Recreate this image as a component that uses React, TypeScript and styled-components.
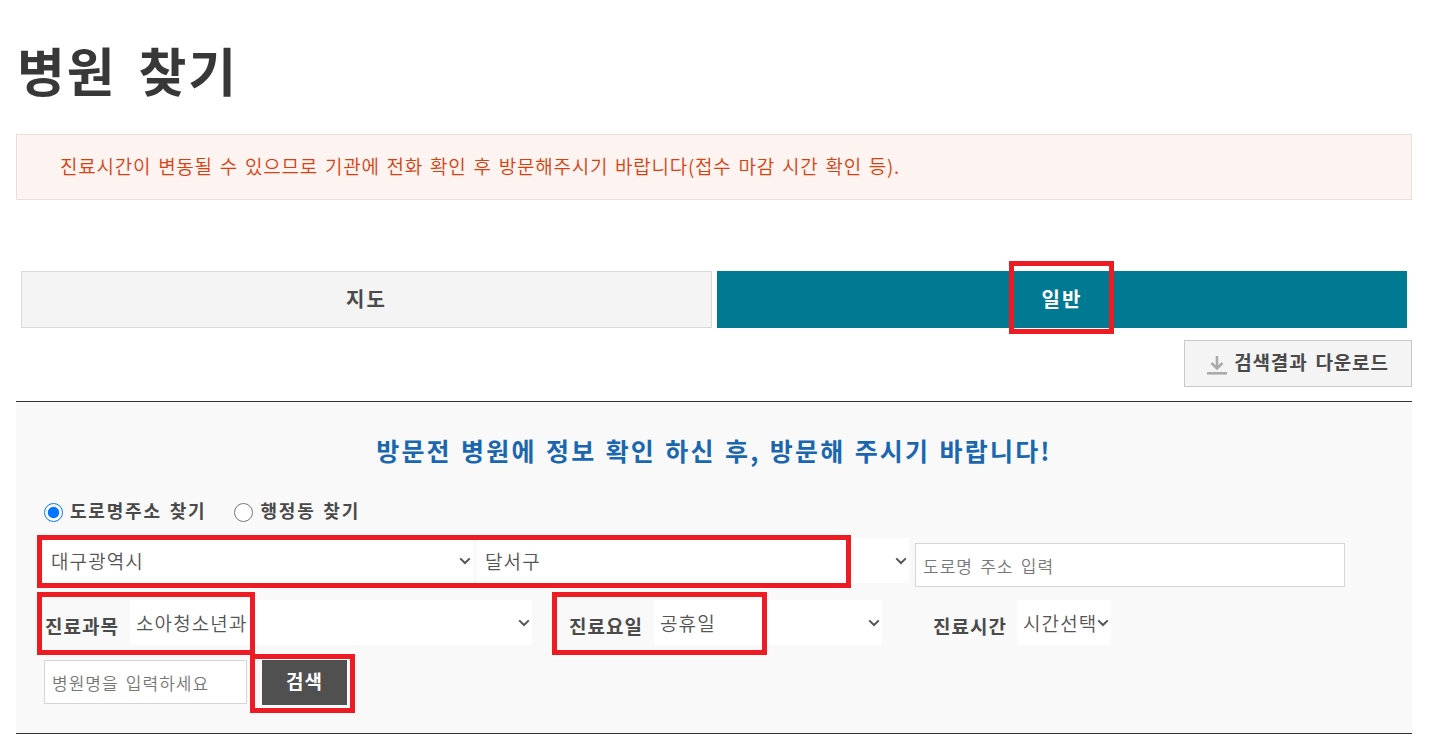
import React from "react";
import styled, { createGlobalStyle } from "styled-components";

const Global = createGlobalStyle`
  html, body { margin: 0; padding: 0; background: #fff; }
  body { font-family: "Noto Sans CJK KR", "Liberation Sans", sans-serif; color: #444; overflow: hidden; }
  * { box-sizing: border-box; }
`;

const chevron =
  "data:image/svg+xml,%3Csvg xmlns='http://www.w3.org/2000/svg' width='12' height='8' viewBox='0 0 12 8'%3E%3Cpath d='M1.2 1.4 6 6l4.8-4.6' fill='none' stroke='%23555' stroke-width='2'/%3E%3C/svg%3E";

const Page = styled.div`
  position: relative;
  width: 1438px;
  height: 751px;
  padding: 0 26px 0 16px;
  overflow: hidden;
`;
const Title = styled.h1`
  margin: 0;
  padding: 32px 0 0 1px;
  height: 134px;
  font-size: 52px;
  line-height: 76px;
  font-weight: 700;
  color: #383838;
  letter-spacing: 2px;
  word-spacing: 8px;
`;
const Alert = styled.div`
  height: 66px;
  padding: 0 43px 3px;
  display: flex;
  align-items: center;
  background: #fdf4f2;
  border: 1px solid #eadfdc;
  color: #d8400f;
  font-size: 19px;
  font-weight: 350;
  letter-spacing: 0.75px;
  word-spacing: 2px;
`;
const Tabs = styled.div`
  margin: 71px 5px 0;
  display: grid;
  grid-template-columns: 691px 690px;
  gap: 5px;
`;
const Tab = styled.div<{ $active?: boolean }>`
  height: 57px;
  padding-bottom: 2px;
  display: flex;
  align-items: center;
  justify-content: center;
  font-size: 20px;
  font-weight: 700;
  letter-spacing: 2px;
  color: ${(p) => (p.$active ? "#fff" : "#4a4a4a")};
  background: ${(p) => (p.$active ? "#007a93" : "#f4f4f4")};
  border: 1px solid ${(p) => (p.$active ? "#007a93" : "#d9d9d9")};
`;
const Tools = styled.div`
  margin-top: 12px;
  display: flex;
  justify-content: flex-end;
`;
const Download = styled.button`
  width: 228px;
  height: 47px;
  padding: 0 0 5px;
  display: flex;
  align-items: center;
  justify-content: center;
  gap: 7px;
  background: #f4f4f4;
  border: 1px solid #c9c9c9;
  color: #4a4a4a;
  font: 700 19px "Noto Sans CJK KR", sans-serif;
  letter-spacing: 0.8px;
  word-spacing: 3px;
`;
const DownloadIcon = styled.svg`
  margin-top: 7px;
`;
const Panel = styled.section`
  margin-top: 14px;
  height: 333px;
  padding: 30px 28px 0;
  background: #f9f9f9;
  border-top: 1px solid #333;
  border-bottom: 1px solid #333;
`;
const Heading = styled.h2`
  margin: 0;
  text-align: center;
  height: 36px;
  font-size: 25px;
  line-height: 36px;
  font-weight: 700;
  color: #1a67b0;
  letter-spacing: 2.2px;
  word-spacing: 1.4px;
`;
const Radios = styled.div`
  margin-top: 28px;
  display: flex;
  align-items: center;
  height: 28px;
  gap: 28px;
`;
const RadioLabel = styled.label`
  display: flex;
  align-items: center;
  gap: 7px;
  font-size: 18px;
  font-weight: 700;
  color: #4a4a4a;
  letter-spacing: 1.8px;
  word-spacing: 2px;
`;
const Radio = styled.input`
  margin: 5px 0 0 0;
  width: 19px;
  height: 19px;
`;
const Row = styled.div<{ $top: number; $start?: boolean }>`
  display: flex;
  align-items: ${(p) => (p.$start ? "flex-start" : "center")};
  margin-top: ${(p) => p.$top}px;
`;
const Select = styled.select<{ $w: number; $ml?: number; $pad?: number }>`
  appearance: none;
  width: ${(p) => p.$w}px;
  height: 45px;
  margin-left: ${(p) => p.$ml ?? 0}px;
  padding: 0 0 0 ${(p) => p.$pad ?? 6}px;
  border: 0;
  border-radius: 0;
  background: #fff url("${chevron}") no-repeat right 2px center;
  color: #555;
  font: 350 19px "Noto Sans CJK KR", sans-serif;
  letter-spacing: 1.1px;
`;
const Label = styled.span<{ $w: number; $ml?: number }>`
  width: ${(p) => p.$w}px;
  margin-left: ${(p) => p.$ml ?? 0}px;
  padding: 5px 0 0 1px;
  font-size: 19px;
  font-weight: 700;
  color: #4a4a4a;
  white-space: nowrap;
  letter-spacing: 1px;
`;
const TextInput = styled.input<{ $w: number; $ml?: number; $mt?: number }>`
  width: ${(p) => p.$w}px;
  height: 44px;
  margin-left: ${(p) => p.$ml ?? 0}px;
  margin-top: ${(p) => p.$mt ?? 0}px;
  padding: 1px 7px 0;
  background: #fff;
  border: 1px solid #d6d6d6;
  font: 350 17px "Noto Sans CJK KR", sans-serif;
  letter-spacing: 1px;
  word-spacing: 2.5px;
  &::placeholder { color: #777; opacity: 1; }
`;
const Search = styled.button`
  width: 85px;
  height: 45px;
  margin-left: 15px;
  padding: 0 0 4px;
  background: #505050;
  border: 0;
  color: #fff;
  font: 700 19px "Noto Sans CJK KR", sans-serif;
  letter-spacing: 1px;
`;
const Mark = styled.div<{ $x: number; $y: number; $w: number; $h: number }>`
  position: absolute;
  left: ${(p) => p.$x}px;
  top: ${(p) => p.$y}px;
  width: ${(p) => p.$w}px;
  height: ${(p) => p.$h}px;
  border: 5px solid #ed1c24;
  pointer-events: none;
`;

export default function App() {
  return (
    <Page>
      <Global />
      <Title>병원 찾기</Title>
      <Alert>진료시간이 변동될 수 있으므로 기관에 전화 확인 후 방문해주시기 바랍니다(접수 마감 시간 확인 등).</Alert>
      <Tabs>
        <Tab>지도</Tab>
        <Tab $active>일반</Tab>
      </Tabs>
      <Tools>
        <Download>
          <DownloadIcon width="20" height="22" viewBox="0 0 20 22" fill="none" aria-hidden="true">
            <path d="M10 2v12M4.5 9l5.5 5.5L15.5 9" stroke="#aaa" strokeWidth="2.6" />
            <rect y="18" width="20" height="2.6" fill="#aaa" />
          </DownloadIcon>
          검색결과 다운로드
        </Download>
      </Tools>
      <Panel>
        <Heading>방문전 병원에 정보 확인 하신 후, 방문해 주시기 바랍니다!</Heading>
        <Radios>
          <RadioLabel>
            <Radio type="radio" name="find" defaultChecked />
            도로명주소 찾기
          </RadioLabel>
          <RadioLabel>
            <Radio type="radio" name="find" />
            행정동 찾기
          </RadioLabel>
        </Radios>
        <Row $top={14} $start>
          <Select $w={430} $ml={-1} $pad={8} defaultValue="대구광역시">
            <option>대구광역시</option>
          </Select>
          <Select $w={432} $ml={4} $pad={8} defaultValue="달서구">
            <option>달서구</option>
          </Select>
          <TextInput $w={430} $ml={6} $mt={5} placeholder="도로명 주소 입력" />
        </Row>
        <Row $top={13}>
          <Label $w={86}>진료과목</Label>
          <Select $w={402} defaultValue="소아청소년과">
            <option>소아청소년과</option>
          </Select>
          <Label $w={86} $ml={36}>진료요일</Label>
          <Select $w={228} defaultValue="공휴일">
            <option>공휴일</option>
          </Select>
          <Label $w={85} $ml={50}>진료시간</Label>
          <Select $w={94} defaultValue="시간선택">
            <option>시간선택</option>
          </Select>
        </Row>
        <Row $top={15} $start>
          <TextInput $w={203} placeholder="병원명을 입력하세요" />
          <Search>검색</Search>
        </Row>
      </Panel>
      <Mark $x={1009} $y={261} $w={105} $h={73} />
      <Mark $x={37} $y={535} $w={814} $h={53} />
      <Mark $x={37} $y={592} $w={218} $h={63} />
      <Mark $x={552} $y={592} $w={215} $h={63} />
      <Mark $x={250} $y={654} $w={105} $h={59} />
    </Page>
  );
}
